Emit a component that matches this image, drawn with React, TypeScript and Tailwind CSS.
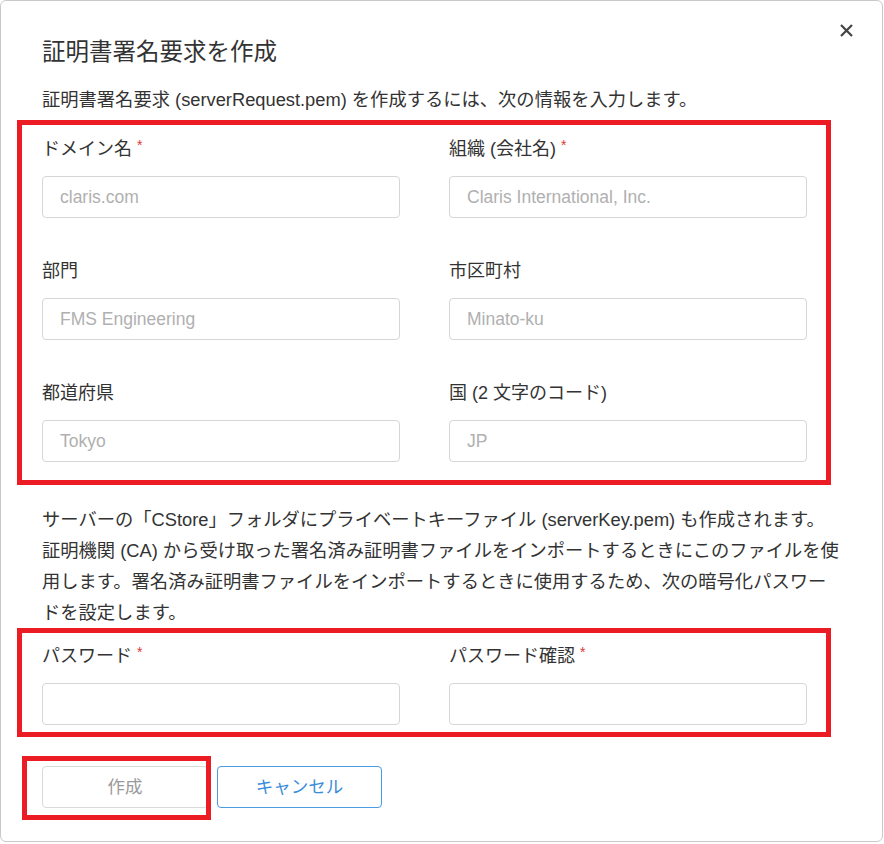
import type { ReactNode } from "react";

type FieldProps = {
  label: string;
  placeholder?: string;
  required?: boolean;
  type?: string;
};

function Field({ label, placeholder, required, type = "text" }: FieldProps) {
  return (
    <div className="flex flex-col gap-[14px]">
      <label className="flex h-[26px] items-center text-[18px] leading-[26px] text-[#333]">
        {label}
        {required ? (
          <span className="ml-[5px] -mt-[8px] text-[14px] leading-none text-[#e3342f]">*</span>
        ) : null}
      </label>
      <input
        type={type}
        placeholder={placeholder}
        className="h-[42px] w-full rounded-[4px] border border-[#d6d6d6] bg-white px-[17px] text-[17.5px] text-[#333] outline-none placeholder:text-[#b0b0b0]"
      />
    </div>
  );
}

function RedFrame({ children, className = "" }: { children: ReactNode; className?: string }) {
  return (
    <div className={`-ml-[25px] w-[814px] border-[5px] border-[#ec1c24] pl-[20px] pr-[19px] ${className}`}>
      {children}
    </div>
  );
}

export default function App() {
  return (
    <div
      className="min-h-[844px] bg-white"
      style={{ fontFamily: '"Liberation Sans", "Noto Sans CJK JP", sans-serif' }}
    >
      <div className="relative h-[842px] w-[883px] rounded-[6px] border border-[#c9c9c9] bg-white pl-[41px] pt-[36px]">
        <button
          type="button"
          aria-label="閉じる"
          className="absolute right-[27px] top-[21px] flex h-[17px] w-[17px] items-center justify-center text-[#444]"
        >
          <svg width="13" height="13" viewBox="0 0 13 13" fill="none" stroke="currentColor" strokeWidth="2.2">
            <path d="M1 1l11 11M12 1L1 12" />
          </svg>
        </button>

        <h1 className="text-[23.5px] font-normal leading-[30px] text-[#333]">証明書署名要求を作成</h1>

        <p className="mt-[20px] whitespace-nowrap text-[18.3px] leading-[26px] text-[#333]">
          証明書署名要求 (serverRequest.pem) を作成するには、次の情報を入力します。
        </p>

        <RedFrame className="mt-[7px] pb-[18px] pt-[11px]">
          <div className="grid grid-cols-[358px_358px] gap-x-[49px] gap-y-[40px]">
            <Field label="ドメイン名" placeholder="claris.com" required />
            <Field label="組織 (会社名)" placeholder="Claris International, Inc." required />
            <Field label="部門" placeholder="FMS Engineering" />
            <Field label="市区町村" placeholder="Minato-ku" />
            <Field label="都道府県" placeholder="Tokyo" />
            <Field label="国 (2 文字のコード)" placeholder="JP" />
          </div>
        </RedFrame>

        <p className="mt-[19px] whitespace-nowrap text-[18.3px] leading-[31px] text-[#333]">
          サーバーの「CStore」フォルダにプライベートキーファイル (serverKey.pem) も作成されます。
          <br />
          証明機関 (CA) から受け取った署名済み証明書ファイルをインポートするときにこのファイルを使
          <br />
          用します。署名済み証明書ファイルをインポートするときに使用するため、次の暗号化パスワー
          <br />
          ドを設定します。
        </p>

        <RedFrame className="pb-[7px] pt-[10px]">
          <div className="grid grid-cols-[358px_358px] gap-x-[49px]">
            <Field label="パスワード" type="password" required />
            <Field label="パスワード確認" type="password" required />
          </div>
        </RedFrame>

        <div className="relative mt-[29px] flex gap-[9px]">
          <button
            type="button"
            disabled
            className="h-[42px] w-[166px] rounded-[4px] border border-[#d9d9d9] bg-white text-[17.5px] text-[#9a9a9a]"
          >
            作成
          </button>
          <button
            type="button"
            className="h-[42px] w-[165px] rounded-[4px] border border-[#4a9be2] bg-white text-[17.5px] text-[#3a8ddb]"
          >
            キャンセル
          </button>
          <div className="pointer-events-none absolute -left-[20px] -top-[10px] h-[64px] w-[189px] border-[5px] border-[#ec1c24]" />
        </div>
      </div>
    </div>
  );
}
